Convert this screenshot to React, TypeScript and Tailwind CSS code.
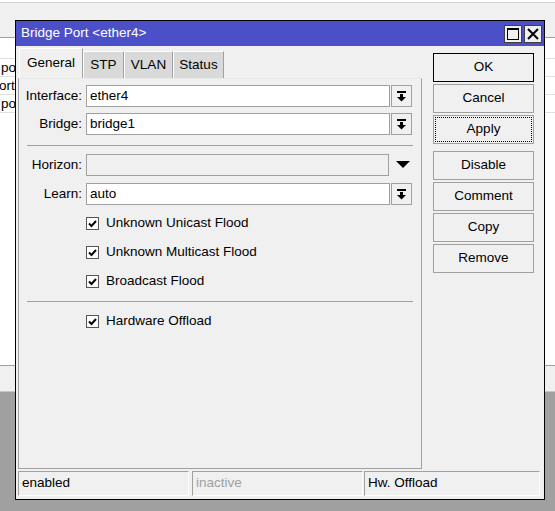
import type { ReactNode } from 'react';

const DropIcon = () => (
  <svg width="9" height="11" viewBox="0 0 9 11">
    <rect x="0" y="0" width="9" height="2" fill="#000" />
    <rect x="3" y="3" width="3" height="3" fill="#000" />
    <polygon points="0,6 9,6 4.5,10.5" fill="#000" />
  </svg>
);

const Field = ({ label, value }: { label: string; value: string }) => (
  <div className="flex items-center h-[22px]">
    <div className="w-[63px] text-right">{label}</div>
    <div className="ml-[4px] w-[304px] h-[22px] border border-[#a0a0a0] bg-white pl-[3px] flex items-center">
      {value}
    </div>
    <div className="ml-[1px] w-[21px] h-[22px] border border-[#a0a0a0] bg-[#f0f0f0] flex items-center justify-center">
      <DropIcon />
    </div>
  </div>
);

const Check = ({ label }: { label: string }) => (
  <div className="flex items-center h-[29px] pl-[67px]">
    <div className="w-[13px] h-[13px] border border-[#555] bg-white flex items-center justify-center">
      <svg width="11" height="11" viewBox="0 0 11 11">
        <polyline points="2,5.5 4.5,8 9,3" fill="none" stroke="#000" strokeWidth="2" />
      </svg>
    </div>
    <span className="ml-[7px]">{label}</span>
  </div>
);

const Btn = ({ children, kind }: { children: ReactNode; kind?: 'default' | 'focus' }) => (
  <div
    className={`relative h-[29px] w-[101px] flex items-center justify-center bg-[#f0f0f0] border ${
      kind === 'default' ? 'border-black' : 'border-[#a0a0a0]'
    }`}
  >
    {kind === 'focus' && <div className="absolute inset-[1px] border border-dotted border-black" />}
    <span className="relative">{children}</span>
  </div>
);

const Sep = () => <div className="ml-[8px] w-[386px] h-px bg-[#a0a0a0]" />;

const tabCls =
  'h-[27px] bg-[#d9d9d9] border-l border-t border-white border-r border-r-[#a0a0a0] flex items-center justify-center';
const statusCls =
  'border-l border-t border-[#a0a0a0] border-r border-b border-r-white border-b-white pl-[3px] flex items-center';

export default function App() {
  return (
    <div className="relative w-[555px] h-[511px] overflow-hidden bg-[#a0a0a0] font-['Liberation_Sans',Arial,sans-serif] text-[13.5px] text-black">
      {/* desktop behind the dialog */}
      <div className="h-[2px] bg-white" />
      <div className="h-[35px] bg-[#f0f0f0] border-t border-[#d4d4d4]" />
      <div className="h-[21px] bg-white border-t border-[#a0a0a0]" />
      <div className="h-[18px] bg-white border-t border-[#e0e0e0] leading-[17px] pl-[1px]">port</div>
      <div className="h-[18px] bg-white border-t border-[#e0e0e0] leading-[17px] ml-[-1px]">ort</div>
      <div className="h-[18px] bg-white border-t border-[#e0e0e0] leading-[17px] pl-[1px]">port</div>
      <div className="h-[253px] bg-white border-t border-[#e0e0e0]" />
      <div className="h-[27px] bg-[#f0f0f0] border-t border-[#a0a0a0] border-b border-b-[#c8c8c8]" />

      {/* dialog window */}
      <div className="absolute left-[15px] top-[20px] w-[530px] h-[480px] border border-black bg-[#f0f0f0] flex flex-col">
        <div className="h-[25px] bg-[#4b50c8] flex items-center justify-between pl-[5px] pr-[2px]">
          <span className="text-white">Bridge Port &lt;ether4&gt;</span>
          <div className="flex gap-[2px] mt-[1px]">
            <div className="w-[18px] h-[18px] bg-[#f0f0f0] border border-[#404040] flex items-center justify-center">
              <svg width="12" height="12" viewBox="0 0 12 12">
                <rect x="0.5" y="0.5" width="11" height="11" fill="none" stroke="#000" />
                <rect x="0" y="0" width="12" height="2" fill="#000" />
              </svg>
            </div>
            <div className="w-[18px] h-[18px] bg-[#f0f0f0] border border-[#404040] flex items-center justify-center">
              <svg width="12" height="12" viewBox="0 0 12 12">
                <path d="M1 1 L11 11 M11 1 L1 11" stroke="#000" strokeWidth="2" />
              </svg>
            </div>
          </div>
        </div>

        <div className="flex h-[423px]">
          <div className="ml-[2px] pt-[2px] w-[404px] flex flex-col">
            <div className="flex items-end h-[30px] pl-[1px]">
              <div className="w-[64px] h-[30px] bg-[#f0f0f0] border-l border-t border-white border-r border-r-[#a0a0a0] flex items-center justify-center">
                General
              </div>
              <div className={`w-[41px] ${tabCls}`}>STP</div>
              <div className={`w-[49px] ${tabCls}`}>VLAN</div>
              <div className={`w-[51px] ${tabCls}`}>Status</div>
            </div>
            <div className="h-[391px] border border-[#a0a0a0] border-t-[#e8e8e8] flex flex-col">
              <div className="mt-[6px]">
                <Field label="Interface:" value="ether4" />
              </div>
              <div className="mt-[6px]">
                <Field label="Bridge:" value="bridge1" />
              </div>
              <div className="mt-[10px]">
                <Sep />
              </div>
              <div className="mt-[8px] flex items-center h-[22px]">
                <div className="w-[63px] text-right">Horizon:</div>
                <div className="ml-[4px] w-[303px] h-[22px] border border-[#a0a0a0] bg-[#f0f0f0]" />
                <svg className="ml-[7px]" width="14" height="8" viewBox="0 0 14 8">
                  <polygon points="0,0 14,0 7,7" fill="#000" />
                </svg>
              </div>
              <div className="mt-[7px]">
                <Field label="Learn:" value="auto" />
              </div>
              <div className="mt-[4px]">
                <Check label="Unknown Unicast Flood" />
                <Check label="Unknown Multicast Flood" />
                <Check label="Broadcast Flood" />
              </div>
              <div className="mt-[5px]">
                <Sep />
              </div>
              <div className="mt-[5px]">
                <Check label="Hardware Offload" />
              </div>
            </div>
          </div>

          <div className="ml-[11px] pt-[7px] flex flex-col gap-[2px]">
            <Btn kind="default">OK</Btn>
            <Btn>Cancel</Btn>
            <Btn kind="focus">Apply</Btn>
            <div className="mt-[5px]">
              <Btn>Disable</Btn>
            </div>
            <Btn>Comment</Btn>
            <Btn>Copy</Btn>
            <Btn>Remove</Btn>
          </div>
        </div>

        <div className="mt-[2px] h-[25px] flex pl-[2px]">
          <div className={`w-[171px] ${statusCls}`}>enabled</div>
          <div className={`ml-[3px] w-[171px] ${statusCls} text-[#a0a0a0]`}>inactive</div>
          <div className={`ml-[1px] w-[176px] ${statusCls}`}>Hw. Offload</div>
        </div>
      </div>
    </div>
  );
}
